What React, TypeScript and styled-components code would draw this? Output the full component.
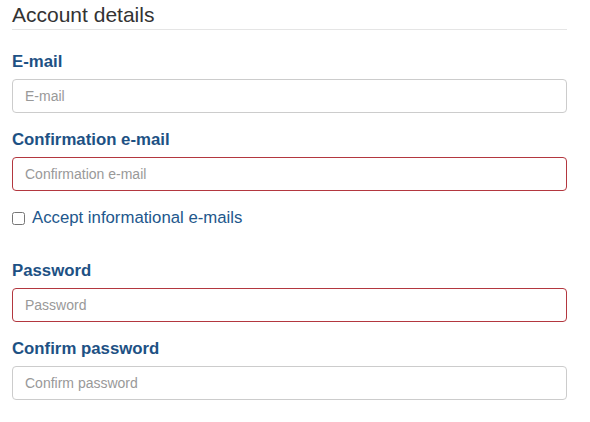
import React from "react";
import styled, { createGlobalStyle } from "styled-components";

const GlobalStyle = createGlobalStyle`
  html, body {
    margin: 0;
    padding: 0;
    background: #ffffff;
  }
  body {
    font-family: "Liberation Sans", Arial, sans-serif;
    color: #333333;
  }
  * {
    box-sizing: border-box;
  }
`;

const fields = [
  { id: "email", label: "E-mail", type: "email", invalid: false },
  { id: "email2", label: "Confirmation e-mail", type: "email", invalid: true },
];

const passwordFields = [
  { id: "password", label: "Password", type: "password", invalid: true },
  { id: "password2", label: "Confirm password", type: "password", invalid: false },
];

const Field = ({ id, label, type, invalid }: { id: string; label: string; type: string; invalid: boolean }) => (
  <FormGroup>
    <Label htmlFor={id}>{label}</Label>
    <Input id={id} type={type} placeholder={label} $invalid={invalid} />
  </FormGroup>
);

const App = () => {
  return (
    <Wrapper>
      <GlobalStyle />
      <Fieldset>
        <Legend>Account details</Legend>
        {fields.map((f) => (
          <Field key={f.id} {...f} />
        ))}
        <CheckboxRow>
          <input type="checkbox" id="newsletter" />
          <label htmlFor="newsletter">Accept informational e-mails</label>
        </CheckboxRow>
        {passwordFields.map((f) => (
          <Field key={f.id} {...f} />
        ))}
      </Fieldset>
    </Wrapper>
  );
};

const Wrapper = styled.div`
  width: 590px;
  padding: 0 23px 0 12px;
`;

const Fieldset = styled.fieldset`
  border: 0;
  margin: 0;
  padding: 0;
  min-width: 0;
`;

const Legend = styled.legend`
  display: block;
  width: 100%;
  padding: 0;
  margin: 0 0 20px;
  font-size: 21px;
  line-height: 29px;
  color: #333333;
  border-bottom: 1px solid #e5e5e5;
`;

const FormGroup = styled.div`
  display: flex;
  flex-direction: column;
  align-items: flex-start;
  margin-bottom: 15px;
`;

const Label = styled.label`
  display: inline-block;
  margin-bottom: 6px;
  font-size: 16.8px;
  line-height: 23px;
  font-weight: 700;
  color: #1d5184;
`;

const Input = styled.input<{ $invalid: boolean }>`
  display: block;
  width: 100%;
  height: 34px;
  padding: 6px 12px;
  font-family: "Liberation Sans", Arial, sans-serif;
  font-size: 14px;
  line-height: 20px;
  color: #555555;
  background: #ffffff;
  border: 1px solid ${(p) => (p.$invalid ? "#b3373f" : "#cccccc")};
  border-radius: 4px;
  outline: none;

  &::placeholder {
    color: #999999;
  }
`;

const CheckboxRow = styled.div`
  display: flex;
  align-items: center;
  gap: 7px;
  height: 24px;
  margin: 1px 0 29px;

  input {
    width: 13px;
    height: 13px;
    margin: 0;
  }

  label {
    font-size: 16.75px;
    line-height: 24px;
    color: #22578c;
  }
`;

export default App;
